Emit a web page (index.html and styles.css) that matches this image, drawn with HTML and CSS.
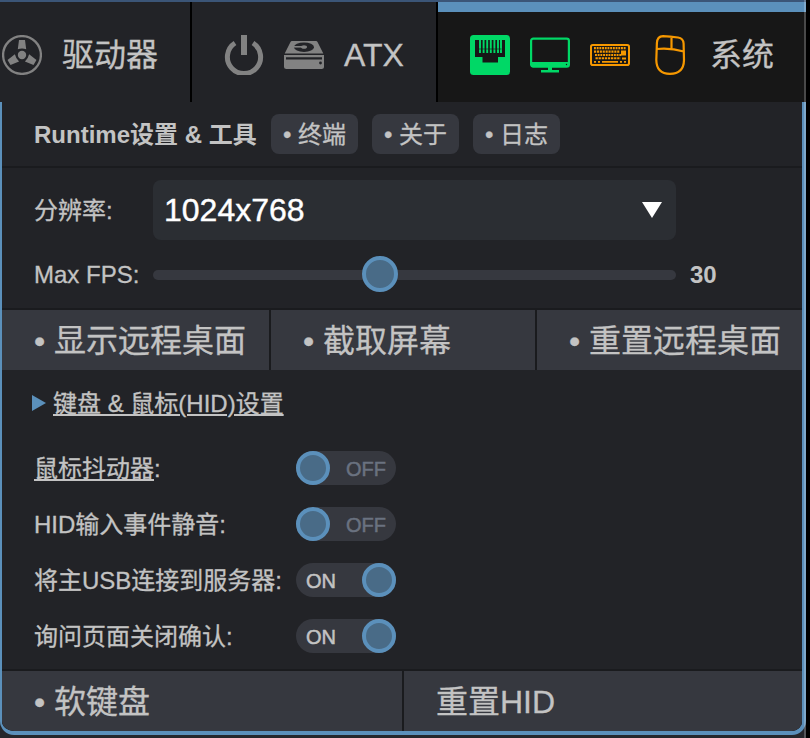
FILE: index.html
```html
<!DOCTYPE html>
<html lang="zh-CN">
<head>
<meta charset="utf-8">
<title>系统</title>
<link rel="stylesheet" href="styles.css">
</head>
<body>
<div class="stage">
<nav class="menu">
  <div class="tab tab-drive">
    <svg class="icon-fan" width="40" height="40" viewBox="0 0 40 40" fill="#828282"><circle cx="20" cy="20" r="18.9" fill="none" stroke="#828282" stroke-width="2.3"/><circle cx="20" cy="20" r="4.200"/><g id="blade"><path d="M17 5h6l1.200 9.200q-4.200-1.300-8.400 0z"/></g><use href="#blade" transform="rotate(120 20 20)"/><use href="#blade" transform="rotate(240 20 20)"/></svg>
    <span>驱动器</span>
  </div>
  <div class="tab tab-atx">
    <svg width="40" height="40" viewBox="0 0 40 40"><path d="M11 8A16.600 16.600 0 1 0 29 8" fill="none" stroke="#828282" stroke-width="5"/><path d="M17 0h6v20h-6z" fill="#828282"/></svg>
    <svg width="40" height="40" viewBox="0 0 40 40" fill="#828282"><path d="M8 6h24q1 0 1.500 1l5.800 11.500H.7L6.500 7Q7 6 8 6z"/><ellipse cx="20" cy="12.200" rx="10" ry="4.800" fill="#222327"/><ellipse cx="20" cy="12" rx="3" ry="1.800"/><path d="M10 11h8v1.600h-8z"/><path d="M0 20h40v11.500q0 2.500-2.500 2.500h-35Q0 34 0 31.500z"/><path d="M2 22.200h36v2.200H2z" fill="#222327"/><circle cx="36.500" cy="28" r="1.400" fill="#222327"/></svg>
    <span>ATX</span>
  </div>
  <div class="tab tab-system">
    <svg width="40" height="40" viewBox="0 0 40 40"><rect width="40" height="40" rx="3.500" fill="#00d866"/><path d="M5 5h30v17h-7v5.500H12.500V22H5z" fill="#171717"/><path d="M10 5v13M13.600 5v13M17.200 5v13M20.800 5v13M24.400 5v13M28 5v13M31 5v13" stroke="#00d866" stroke-width="1.900"/><path d="M8.500 14h23" stroke="#171717" stroke-width="1" opacity=".6"/></svg>
    <svg width="40" height="40" viewBox="0 0 40 40"><rect x="1.100" y="3.600" width="37.800" height="28" rx="2.200" fill="none" stroke="#00d866" stroke-width="2.200"/><path d="M1.500 27h37v5h-37zM18 32h4v3h7v2.500H11V35h7z" fill="#00d866"/><circle cx="36.500" cy="29.500" r=".7" fill="#171717"/></svg>
    <svg width="40" height="40" viewBox="0 0 40 40"><rect x="1" y="10" width="38" height="20" rx="1.800" fill="none" stroke="#f69800" stroke-width="2"/><path d="M4 13.200h32" stroke="#f69800" stroke-width="2.200" stroke-dasharray="1.900 .8"/><path d="M4 16.600h26" stroke="#f69800" stroke-width="2.200" stroke-dasharray="2.100 .8"/><path d="M5 20h27" stroke="#f69800" stroke-width="2.200" stroke-dasharray="1.900 .8"/><path d="M5.500 23.300h25" stroke="#f69800" stroke-width="2" stroke-dasharray="2.300 .8"/><path d="M31 15.500h5v5h-5zM32 22.500h4v2h-4zM12 26h16v1.800H12zM4 26h2v1.800H4zM8 26h2v1.800H8zM30 26h2v1.800h-2zM34 26h2v1.800h-2z" fill="#f69800"/></svg>
    <svg width="40" height="40" viewBox="0 0 40 40" fill="none" stroke="#f69800" stroke-width="2.200"><path d="M13 1.100Q20 1.300 28 2.500Q33.300 3.200 33.600 8.500L34 25Q33.700 38.900 20 38.900Q6.500 38.700 6.300 25L6.900 8Q7.300 1.300 13 1.100zM6.700 14Q20 12.500 33.800 16.500M21.500 1.800V13.500"/></svg>
    <span>系统</span>
  </div>
</nav>
<main class="panel">
  <header class="head"><b>Runtime设置 &amp; 工具</b><button class="chip">• 终端</button><button class="chip">• 关于</button><button class="chip">• 日志</button></header>
  <section class="video">
    <div class="field resolution"><label>分辨率:</label><div class="select"><span>1024x768</span><i class="arrow"></i></div></div>
    <div class="field fps"><label>Max FPS:</label><div class="slider"><i class="knob"></i></div><b>30</b></div>
  </section>
  <div class="buttons three"><button>• 显示远程桌面</button><button>• 截取屏幕</button><button>• 重置远程桌面</button></div>
  <section class="hid">
    <div class="summary"><i class="marker"></i><span class="link">键盘 &amp; 鼠标(HID)设置</span></div>
    <div class="option"><label><span class="link">鼠标抖动器</span>:</label><div class="switch"><i class="knob"></i><span>OFF</span></div></div>
    <div class="option"><label>HID输入事件静音:</label><div class="switch"><i class="knob"></i><span>OFF</span></div></div>
    <div class="option"><label>将主USB连接到服务器:</label><div class="switch on"><span>ON</span><i class="knob"></i></div></div>
    <div class="option"><label>询问页面关闭确认:</label><div class="switch on"><span>ON</span><i class="knob"></i></div></div>
  </section>
  <div class="buttons two"><button>• 软键盘</button><button>重置HID</button></div>
</main>
<div class="edge"></div>
</div>
</body>
</html>
```
FILE: styles.css
```css
* { box-sizing: border-box; }
body { margin: 0; background: #000; }
body, button { font: 24px "Liberation Sans", "Noto Sans CJK SC", sans-serif; color: #c3c3c3; -webkit-text-stroke: .3px; }
b { -webkit-text-stroke: 0; }
button { border: 0; margin: 0; background: #36383f; text-align: left; white-space: nowrap; }
svg { display: block; flex: none; }
.stage { position: relative; width: 806px; height: 738px; background: #25272c; overflow: hidden; }
.menu { display: flex; height: 102px; border-top: 2px solid #3b5577; background: #222327; }
.tab { display: flex; align-items: center; gap: 20px; padding-top: 6px; font-size: 32px; line-height: 40px; white-space: nowrap; }
.tab-drive { width: 192px; padding-left: 2px; border-right: 2px solid #000; }
.tab-atx { width: 246px; padding-left: 32px; border-right: 2px solid #000; }
.tab-system { width: 368px; padding: 0 0 4px 32px; border-top: 10px solid #5b90bb; background: #171717; }
.panel { display: flex; flex-direction: column; width: 806px; height: 633px; border: solid #5b90bb; border-width: 0 4px 4px 2px; border-radius: 0 0 14px 14px; background: #222327; overflow: hidden; }
.head { display: flex; align-items: center; height: 66px; padding: 0 0 0 32px; border-bottom: 2px solid #1a1b1e; }
.head b { width: 237px; padding-bottom: 4px; white-space: nowrap; }
.chip { width: 87px; height: 40px; padding: 0 12px 4px; margin-right: 14px; border-radius: 8px; }
.video { height: 142px; padding: 12px 0 0 32px; border-bottom: 2px solid #1a1b1e; }
.field { display: flex; align-items: center; }
.field label { width: 119px; white-space: nowrap; }
.resolution { height: 60px; }
.resolution label { padding-bottom: 4px; }
.fps { height: 70px; }
.select { display: flex; align-items: center; justify-content: space-between; width: 523px; height: 60px; padding: 0 14px 0 11px; border-radius: 8px; background: #2b2e33; color: #fff; font-size: 32px; -webkit-text-stroke: .4px #fff; }
.arrow { width: 20px; height: 16px; background: #fff; clip-path: polygon(0 0, 100% 0, 50% 100%); }
.slider { display: flex; align-items: center; justify-content: center; width: 523px; height: 10px; padding-right: 69px; border-radius: 5px; background: #36383f; }
.fps b { margin-left: 14px; }
.knob { flex: none; width: 34px; height: 34px; border: 4px solid #5b90bb; border-radius: 50%; background: #496b87; }
.slider .knob { width: 36px; height: 36px; margin-top: -2px; }
.buttons { display: grid; gap: 2px; height: 60px; background: #1a1b1e; }
.buttons button { padding: 0 32px 4px; font-size: 32px; }
.three { grid-template-columns: 267px 264px 265px; }
.two { grid-template-columns: 400px 398px; }
.hid { height: 301px; padding-top: 4px; border-bottom: 2px solid #1a1b1e; }
.summary { display: flex; align-items: center; height: 58px; padding-left: 30px; }
.summary .link { padding-bottom: 4px; }
.marker { width: 14px; height: 16px; margin-right: 7px; background: #5b90bb; clip-path: polygon(0 0, 100% 50%, 0 100%); }
.link { text-decoration: underline; text-decoration-thickness: 2px; text-underline-offset: 2px; }
.summary + .option { margin-top: 8px; }
.option { display: flex; align-items: center; height: 56px; padding-left: 32px; }
.option label { width: 262px; padding-bottom: 4px; white-space: nowrap; }
.switch { display: flex; align-items: center; justify-content: space-between; width: 100px; height: 34px; padding-right: 10px; border-radius: 17px; background: #36383f; color: #6a7280; font-size: 20px; -webkit-text-stroke: .5px; }
.switch span { padding-top: 2px; }
.switch.on { padding: 0 0 0 10px; color: #c3c3c3; }
.edge { position: absolute; top: 0; right: 0; width: 2px; height: 738px; background: rgba(255, 255, 255, .22); }
```
